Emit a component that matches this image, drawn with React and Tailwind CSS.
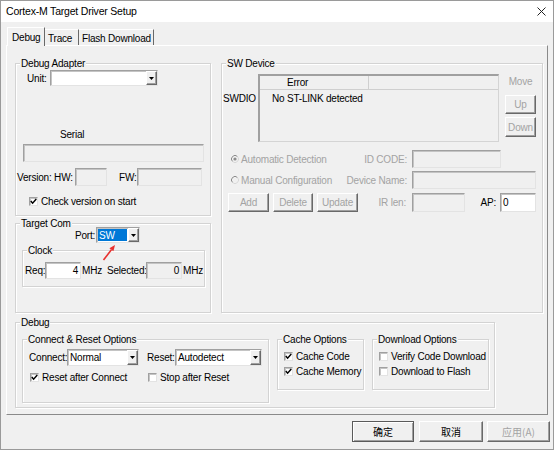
import React from "react";

const SUNK =
  "border border-t-[#a0a0a0] border-l-[#a0a0a0] border-r-[#e3e3e3] border-b-[#e3e3e3] shadow-[inset_1px_1px_0_#c4c4c4]";
const RAISED =
  "border border-t-white border-l-white border-r-[#696969] border-b-[#696969] shadow-[inset_-1px_-1px_0_#a0a0a0]";
const GRAY = "text-[#a3a3a3]";

function Check({ checked }) {
  return (
    <span className={"w-[9px] h-[9px] shrink-0 bg-white flex items-center justify-center " + SUNK}>
      {checked && (
        <svg width="7" height="7" viewBox="0 0 7 7">
          <path d="M0.8 3.1 L2.6 5.2 L6.3 1.1" fill="none" stroke="#000" strokeWidth="1.5" />
        </svg>
      )}
    </span>
  );
}

function Radio({ on }) {
  return (
    <svg width="8" height="8" viewBox="0 0 8 8" className="shrink-0">
      <circle cx="4" cy="4" r="3.5" fill="#f0f0f0" />
      <path d="M6.5 1.5A3.5 3.5 0 0 0 1.5 6.5" stroke="#8c8c8c" fill="none" />
      <path d="M1.5 6.5A3.5 3.5 0 0 0 6.5 1.5" stroke="#d8d8d8" fill="none" />
      {on && <circle cx="4" cy="4" r="1.6" fill="#8c8c8c" />}
    </svg>
  );
}

function Combo({ className, text, selected }) {
  return (
    <div className={"flex bg-white shrink-0 " + SUNK + " " + className}>
      {selected ? (
        <div className="flex-1 flex p-[1px] overflow-hidden">
          <span className="flex-1 bg-[#0078d7] text-white flex items-center pl-[1px]">{text}</span>
        </div>
      ) : (
        <div className="flex-1 flex items-center pl-[2px] overflow-hidden whitespace-nowrap">{text}</div>
      )}
      <div className={"w-[11px] shrink-0 flex items-center justify-center bg-[#f0f0f0] " + RAISED}>
        <svg width="5" height="3" viewBox="0 0 5 3">
          <path d="M0 0H5L2.5 3Z" fill="#000" />
        </svg>
      </div>
    </div>
  );
}

function Group({ title, className, children }) {
  return (
    <div
      className={
        "flex flex-col shrink-0 border border-[#d3d3d3] shadow-[inset_1px_1px_0_#ffffff,1px_1px_0_#ffffff] " +
        className
      }
    >
      <span className="self-start -mt-[7px] ml-[4px] px-[1px] h-[13px] whitespace-nowrap bg-[#f0f0f0]">
        {title}
      </span>
      {children}
    </div>
  );
}

function Btn({ className, children, gray }) {
  return (
    <div
      className={
        "shrink-0 flex items-center justify-center bg-[#f0f0f0] " +
        RAISED +
        " " +
        (gray ? GRAY + " " : "") +
        className
      }
    >
      {children}
    </div>
  );
}

export default function App() {
  return (
    <div className="relative w-[554px] h-[450px] bg-[#f0f0f0] border border-[#9a9a9a] flex flex-col text-[10px] leading-[13px] tracking-[-0.2px] text-black font-['Liberation_Sans',Arial,sans-serif] overflow-hidden">
      {/* title bar */}
      <div className="h-[21px] shrink-0 bg-white flex items-center justify-between pl-[5px] pr-[7px] text-[10.5px]">
        <span>Cortex-M Target Driver Setup</span>
        <svg width="9" height="9" viewBox="0 0 9 9">
          <path d="M0.5 0.5L8.5 8.5M8.5 0.5L0.5 8.5" stroke="#222" strokeWidth="1" />
        </svg>
      </div>

      <div className="flex-1 flex flex-col px-[5px] pt-[5px]">
        {/* tabs */}
        <div className="flex items-end h-[18px] shrink-0">
          <div className="relative z-10 ml-[1px] w-[38px] h-[19px] -mb-[1px] bg-[#f0f0f0] border-t border-l border-r border-t-white border-l-white border-r-[#696969] flex items-center pl-[4px] pt-[1px]">
            Debug
          </div>
          <div className="w-[34px] h-[16px] border-t border-r border-t-white border-r-[#696969] flex items-center pl-[3px] pt-[1px]">
            Trace
          </div>
          <div className="w-[75px] h-[16px] border-t border-r border-t-white border-r-[#696969] flex items-center pl-[3px] pt-[1px] whitespace-nowrap">
            Flash Download
          </div>
        </div>

        {/* panel */}
        <div className="w-[542px] h-[370px] shrink-0 border border-t-white border-l-white border-r-[#8a8a8a] border-b-[#8a8a8a] flex flex-col pl-[8px] pt-[17px]">
          <div className="flex gap-[10px] items-start">
            {/* left column */}
            <div className="w-[196px] flex flex-col shrink-0">
              <Group title="Debug Adapter" className="h-[153px]">
                <div className="flex items-center h-[16px]">
                  <span className="w-[34px] pl-[11px] shrink-0">Unit:</span>
                  <Combo className="w-[108px] h-[16px]" text="" />
                </div>
                <span className="mt-[42px] ml-[44px]">Serial</span>
                <div className={"mt-[3px] ml-[7px] w-[181px] h-[18px] " + SUNK} />
                <div className="mt-[6px] flex items-center h-[18px]">
                  <span className="ml-[1px] w-[58px] whitespace-nowrap shrink-0">Version: HW:</span>
                  <div className={"w-[32px] h-[18px] shrink-0 " + SUNK} />
                  <span className="ml-[12px] w-[18px] shrink-0">FW:</span>
                  <div className={"w-[65px] h-[18px] shrink-0 " + SUNK} />
                </div>
                <div className="mt-[9px] flex items-center h-[13px] pl-[13px] gap-[3px]">
                  <Check checked />
                  <span className="whitespace-nowrap">Check version on start</span>
                </div>
              </Group>

              <Group title="Target Com" className="mt-[7px] h-[90px]">
                <div className="-mt-[3px] flex items-center h-[16px]">
                  <span className="ml-[59px] w-[21px] shrink-0">Port:</span>
                  <Combo className="w-[44px] h-[16px]" text="SW" selected />
                </div>
                <Group title="Clock" className="mt-[7px] ml-[6px] w-[183px] h-[37px]">
                  <div className="mt-[5px] flex items-center h-[17px] whitespace-nowrap">
                    <span className="ml-[2px] w-[20px] shrink-0">Req:</span>
                    <div className={"w-[36px] h-[17px] shrink-0 bg-white flex items-center justify-end pr-[2px] " + SUNK}>
                      4
                    </div>
                    <span className="w-[25px] pl-[1px] shrink-0">MHz</span>
                    <span className="w-[40px] pl-[1px] shrink-0">Selected:</span>
                    <div className={"w-[36px] h-[17px] shrink-0 flex items-center justify-end pr-[2px] " + SUNK}>
                      0
                    </div>
                    <span className="pl-[1px]">MHz</span>
                  </div>
                </Group>
              </Group>
            </div>

            {/* SW device */}
            <Group title="SW Device" className="w-[322px] h-[250px]">
              <div className="mt-[4px] flex h-[68px]">
                <span className="w-[36px] pl-[1px] mt-[18px] shrink-0">SWDIO</span>
                <div className="w-[241px] h-[68px] shrink-0 border-t-2 border-l-2 border-r border-b border-t-[#a0a0a0] border-l-[#a0a0a0] border-r-[#d4d4d4] border-b-[#d4d4d4] flex flex-col">
                  <div className="flex h-[14px] border-b border-[#cfcfcf]">
                    <div className="w-[109px] border-r border-[#cfcfcf] pl-[27px] flex items-center">Error</div>
                    <div className="flex-1" />
                  </div>
                  <div className="pl-[12px] pt-[2px] whitespace-nowrap">No ST-LINK detected</div>
                </div>
                <div className="flex-1 flex flex-col pl-[6px]">
                  <span className={"mt-[1px] w-[31px] text-center " + GRAY}>Move</span>
                  <Btn gray className="mt-[7px] w-[31px] h-[19px]">
                    Up
                  </Btn>
                  <Btn gray className="mt-[3px] w-[31px] h-[20px]">
                    Down
                  </Btn>
                </div>
              </div>

              <div className="mt-[8px] flex items-center h-[18px] whitespace-nowrap">
                <div className={"w-[123px] shrink-0 flex items-center pl-[9px] gap-[2px] " + GRAY}>
                  <Radio on />
                  <span>Automatic Detection</span>
                </div>
                <span className={"w-[67px] shrink-0 text-right pr-[5px] " + GRAY}>ID CODE:</span>
                <div className={"w-[89px] h-[18px] shrink-0 " + SUNK} />
              </div>

              <div className="mt-[3px] flex items-center h-[18px] whitespace-nowrap">
                <div className={"w-[123px] shrink-0 flex items-center pl-[9px] gap-[2px] " + GRAY}>
                  <Radio />
                  <span>Manual Configuration</span>
                </div>
                <span className={"w-[67px] shrink-0 text-right pr-[5px] " + GRAY}>Device Name:</span>
                <div className={"w-[124px] h-[18px] shrink-0 " + SUNK} />
              </div>

              <div className="mt-[4px] flex items-center h-[19px] whitespace-nowrap">
                <Btn gray className="ml-[6px] w-[41px] h-[19px]">
                  Add
                </Btn>
                <Btn gray className="ml-[4px] w-[40px] h-[19px]">
                  Delete
                </Btn>
                <Btn gray className="ml-[4px] w-[41px] h-[19px]">
                  Update
                </Btn>
                <span className={"w-[54px] shrink-0 text-right pr-[6px] " + GRAY}>IR len:</span>
                <div className={"w-[53px] h-[19px] shrink-0 " + SUNK} />
                <span className="w-[35px] shrink-0 text-right pr-[4px]">AP:</span>
                <div className={"w-[36px] h-[19px] shrink-0 bg-white pl-[2px] flex items-center " + SUNK}>0</div>
              </div>
            </Group>
          </div>

          {/* Debug group */}
          <Group title="Debug" className="mt-[9px] w-[480px] h-[86px]">
            <div className="mt-[10px] ml-[6px] flex items-start whitespace-nowrap">
              <Group title="Connect & Reset Options" className="w-[247px] h-[64px]">
                <div className="mt-[3px] flex items-center h-[17px]">
                  <span className="ml-[6px] w-[38px] shrink-0">Connect:</span>
                  <Combo className="w-[72px] h-[17px]" text="Normal" />
                  <span className="ml-[8px] w-[28px] shrink-0">Reset:</span>
                  <Combo className="w-[87px] h-[17px]" text="Autodetect" />
                </div>
                <div className="mt-[5px] flex items-center h-[13px]">
                  <div className="w-[125px] shrink-0 pl-[7px] flex items-center gap-[3px]">
                    <Check checked />
                    <span>Reset after Connect</span>
                  </div>
                  <div className="flex items-center gap-[3px]">
                    <Check />
                    <span>Stop after Reset</span>
                  </div>
                </div>
              </Group>

              <Group title="Cache Options" className="ml-[8px] w-[87px] h-[51px]">
                <div className="mt-[4px] flex items-center h-[13px] pl-[6px] gap-[3px]">
                  <Check checked />
                  <span>Cache Code</span>
                </div>
                <div className="mt-[2px] flex items-center h-[13px] pl-[6px] gap-[3px]">
                  <Check checked />
                  <span>Cache Memory</span>
                </div>
              </Group>

              <Group title="Download Options" className="ml-[8px] w-[117px] h-[51px]">
                <div className="mt-[4px] w-[113px] overflow-hidden flex items-center h-[13px] pl-[6px] gap-[3px]">
                  <Check />
                  <span>Verify Code Download</span>
                </div>
                <div className="mt-[2px] flex items-center h-[13px] pl-[6px] gap-[3px]">
                  <Check />
                  <span>Download to Flash</span>
                </div>
              </Group>
            </div>
          </Group>
        </div>

        {/* bottom buttons */}
        <div className="mt-[6px] flex h-[21px] font-['Noto_Sans_CJK_SC','Liberation_Sans',sans-serif] tracking-normal">
          <div className="ml-[346px] w-[62px] h-[21px] shrink-0 flex items-center justify-center bg-[#f0f0f0] border border-[#5a5a5a] shadow-[inset_1px_1px_0_#ffffff,inset_-1px_-1px_0_#a0a0a0]">
            确定
          </div>
          <Btn className="ml-[5px] w-[64px] h-[21px]">取消</Btn>
          <Btn gray className="ml-[4px] w-[63px] h-[21px]">
            应用(A)
          </Btn>
        </div>
      </div>

      {/* red annotation arrow */}
      <svg
        className="absolute left-[99px] top-[242px] pointer-events-none"
        width="20"
        height="22"
        viewBox="0 0 20 22"
      >
        <path d="M3.5 17L11.4 6.8" stroke="#e8312f" strokeWidth="1.6" fill="none" />
        <path d="M15 2L13.4 8.3L9.4 5.2Z" fill="#e8312f" />
      </svg>
    </div>
  );
}
